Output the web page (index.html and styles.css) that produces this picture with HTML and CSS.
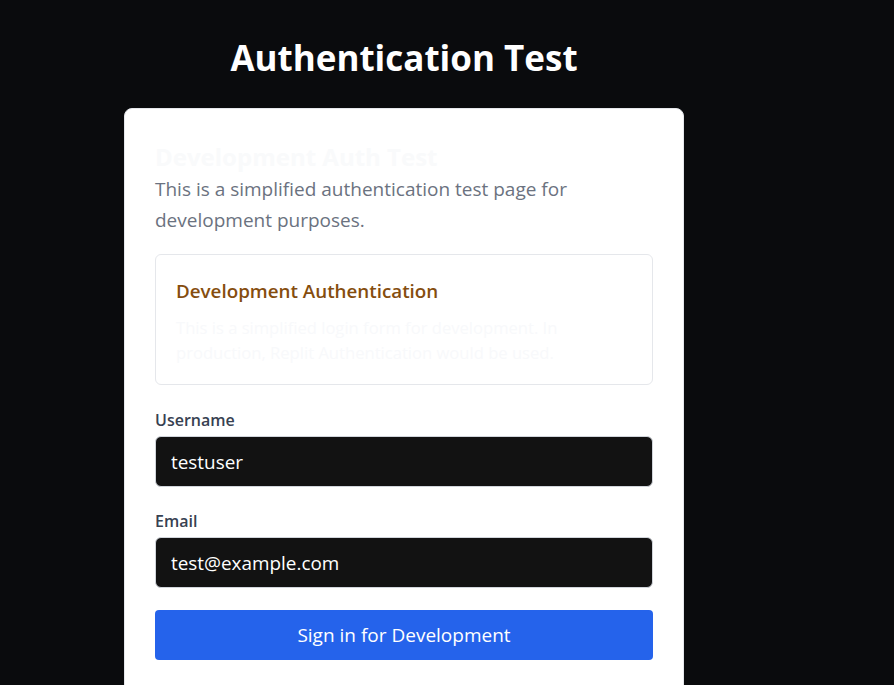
FILE: index.html
```html
<!DOCTYPE html>
<html lang="en">
<head>
<meta charset="utf-8">
<title>Authentication Test</title>
<link rel="stylesheet" href="styles.css">
</head>
<body>
<main class="page">
  <h1 class="page-title">Authentication Test</h1>
  <section class="card">
    <h2 class="card-title">Development Auth Test</h2>
    <p class="card-desc">This is a simplified authentication test page for development purposes.</p>
    <div class="notice">
      <h3 class="notice-title">Development Authentication</h3>
      <p class="notice-text">This is a simplified login form for development. In production, Replit Authentication would be used.</p>
    </div>
    <form class="form">
      <div class="field">
        <label class="label" for="username">Username</label>
        <input class="input" id="username" type="text" value="testuser">
      </div>
      <div class="field">
        <label class="label" for="email">Email</label>
        <input class="input" id="email" type="email" value="test@example.com">
      </div>
      <button class="button" type="button">Sign in for Development</button>
    </form>
  </section>
</main>
</body>
</html>
```

FILE: styles.css
```css
* { box-sizing: border-box; }
html, body { margin: 0; padding: 0; }
body {
  background: #0a0b0d;
  font-family: "Open Sans", "Noto Sans", sans-serif;
  height: 685px;
  overflow: hidden;
}
.page {
  width: 560px;
  margin-left: 124px;
  padding-top: 32px;
}
.page-title {
  margin: 0;
  text-align: center;
  color: #ffffff;
  font-size: 35px;
  line-height: 52px;
  font-weight: 700;
}
.card {
  margin-top: 24px;
  background: #ffffff;
  border: 1px solid #e5e7eb;
  border-radius: 8px;
  padding: 31px 30px 40px;
}
.card-title {
  margin: 0;
  font-size: 24px;
  line-height: 34px;
  font-weight: 700;
  color: #f9fafb;
}
.card-desc {
  margin: 0;
  font-size: 19px;
  line-height: 31px;
  color: #6b7280;
}
.notice {
  margin-top: 18px;
  border: 1px solid #e5e7eb;
  border-radius: 6px;
  padding: 22px 20px 19px;
}
.notice-title {
  margin: 0;
  font-size: 18.8px;
  line-height: 28px;
  font-weight: 600;
  color: #854d0e;
}
.notice-text {
  margin: 10px 0 0;
  font-size: 16.6px;
  line-height: 25px;
  color: #f8f9fb;
}
.form {
  margin-top: 24px;
  display: flex;
  flex-direction: column;
  gap: 21px;
}
.field {
  display: flex;
  flex-direction: column;
  gap: 5px;
}
.field + .field {
  margin-top: 2px;
}
.label {
  font-size: 16px;
  line-height: 22px;
  font-weight: 600;
  color: #374151;
}
.input {
  height: 51px;
  background: #121212;
  border: 1px solid #d1d5db;
  border-radius: 6px;
  padding: 0 15px;
  color: #ffffff;
  font-family: inherit;
  font-size: 18.9px;
}
.button {
  margin-top: 1px;
  height: 50px;
  background: #2563eb;
  border: none;
  border-radius: 4px;
  color: #ffffff;
  font-family: inherit;
  font-size: 19px;
}
```
